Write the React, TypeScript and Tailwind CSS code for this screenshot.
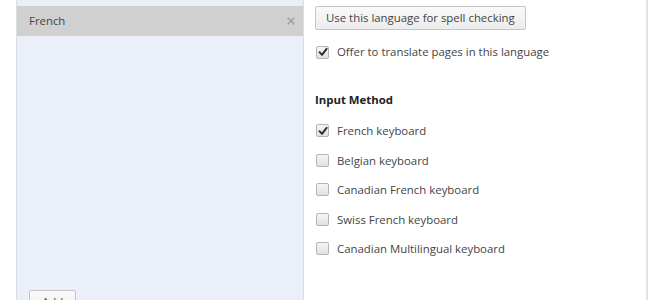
import { X } from 'lucide-react';

const keyboards = [
    { label: 'French keyboard', checked: true },
    { label: 'Belgian keyboard', checked: false },
    { label: 'Canadian French keyboard', checked: false },
    { label: 'Swiss French keyboard', checked: false },
    { label: 'Canadian Multilingual keyboard', checked: false },
];

function Checkbox({ checked }: { checked: boolean }) {
    return (
        <span className="w-[13px] h-[13px] shrink-0 rounded-[2px] border border-[#b4b4b4] bg-gradient-to-b from-[#f6f6f6] to-[#e0e0e0] flex items-center justify-center">
            {checked && (
                <svg width="10" height="10" viewBox="0 0 10 10">
                    <path d="M1.5 5.2 L4 7.8 L8.6 1.8" fill="none" stroke="#2a2a2a" strokeWidth="1.9" strokeLinecap="round" strokeLinejoin="round" />
                </svg>
            )}
        </span>
    );
}

export default function App() {
    return (
        <div className="w-[660px] h-[300px] overflow-hidden bg-white flex text-[11.4px] text-[#333] font-['Open_Sans','Noto_Sans',sans-serif]">
            {/* Language list */}
            <div className="ml-[16px] w-[288px] h-[320px] border-x border-[#dadde2] bg-[#eaeff9] pt-[6px] flex flex-col">
                <div className="h-[30px] bg-[#d0d0d0] flex items-center pl-[12px] pr-[6px]">
                    <span className="flex-1 text-[#444]">French</span>
                    <X className="w-[12px] h-[12px] text-[#9a9a9a]" strokeWidth={2.5} />
                </div>
                <div className="flex-1" />
                <div className="pl-[12px] pb-[6px]">
                    <button className="h-[24px] px-[12px] rounded-[2px] border border-[#c4c4c4] bg-gradient-to-b from-[#fafafa] to-[#ececec] text-[#444]">
                        Add
                    </button>
                </div>
            </div>

            {/* Language options */}
            <div className="flex-1 pl-[11px] pt-[6px] flex flex-col">
                <button className="self-start h-[24px] px-[10px] rounded-[2px] border border-[#c6c6c6] bg-gradient-to-b from-[#f9f9f9] to-[#ececec] text-[#444] leading-none">
                    Use this language for spell checking
                </button>
                <label className="mt-[14px] flex items-center gap-[8px] text-[#444] h-[16px] pl-[1px]">
                    <Checkbox checked />
                    Offer to translate pages in this language
                </label>

                <div className="mt-[32px] font-bold text-[#222] h-[16px] flex items-center">Input Method</div>

                <div className="mt-[8px] flex flex-col">
                    {keyboards.map((k) => (
                        <label key={k.label} className="h-[29.5px] flex items-center gap-[8px] text-[#444] pl-[1px]">
                            <Checkbox checked={k.checked} />
                            {k.label}
                        </label>
                    ))}
                </div>
            </div>

            {/* Dialog edge */}
            <div className="w-[2px] bg-[#e3e3e3] mr-[12px]" />
        </div>
    );
}
